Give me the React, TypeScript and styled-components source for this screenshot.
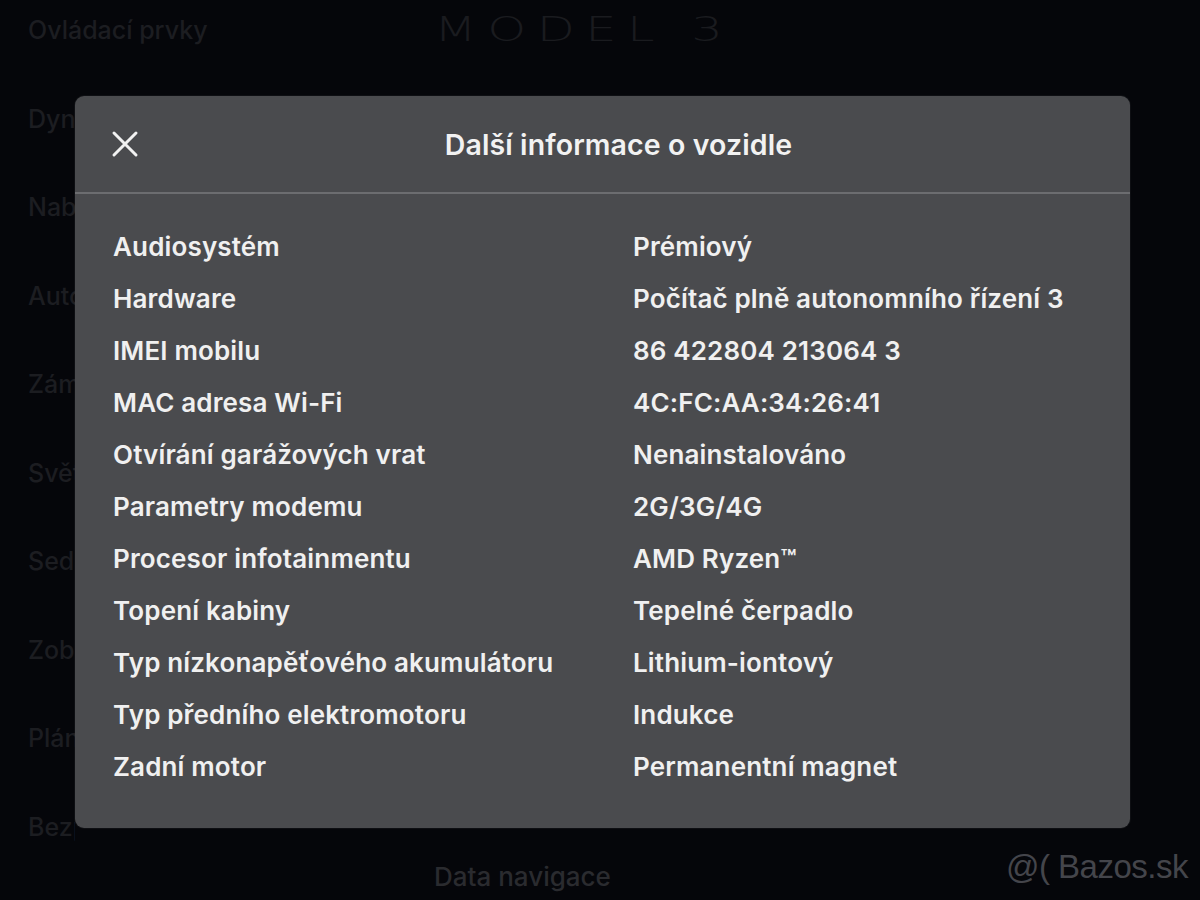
import React from "react";
import styled, { createGlobalStyle } from "styled-components";

const Global = createGlobalStyle`
  html, body { margin: 0; padding: 0; background: #05060a; }
  body { font-family: Inter, "Noto Sans", sans-serif; -webkit-font-smoothing: antialiased; }
`;

const Screen = styled.div`
  position: relative;
  width: 1200px;
  height: 900px;
  overflow: hidden;
  background: #05060a;
  display: grid;
  grid-template-columns: 400px 1fr;
`;

const Sidebar = styled.nav`
  display: flex;
  flex-direction: column;
  padding: 15px 0 0 28px;
`;

const SideItem = styled.div<{ $clipped?: boolean }>`
  height: 88.5px;
  font-size: 25px;
  font-weight: 500;
  color: #1c1d21;
  white-space: nowrap;
  overflow: hidden;
  max-width: ${(p) => (p.$clipped ? "47px" : "none")};
`;

const Main = styled.main`
  display: flex;
  flex-direction: column;
  align-items: flex-start;
  justify-content: space-between;
  padding: 10px 0 8px 34px;
`;

const ModelTitle = styled.div`
  font-family: "DejaVu Sans", sans-serif;
  font-weight: 200;
  font-size: 33px;
  letter-spacing: 7px;
  color: #1a1b1f;
  transform: scaleX(1.5);
  transform-origin: left center;
`;

const BottomLabel = styled.div`
  font-size: 26px;
  font-weight: 500;
  color: #2a2b2f;
`;

const Watermark = styled.div`
  position: absolute;
  right: 12px;
  bottom: 14px;
  font-family: "Liberation Sans", Arial, sans-serif;
  font-size: 33px;
  color: #44454b;
  letter-spacing: -0.5px;
`;

const Modal = styled.section`
  position: absolute;
  left: 75px;
  top: 96px;
  width: 1055px;
  height: 732px;
  background: #4a4b4e;
  border-radius: 9px;
  display: flex;
  flex-direction: column;
  box-shadow: 0 0 0 1px rgba(255,255,255,0.04);
`;

const ModalHeader = styled.header`
  position: relative;
  height: 96px;
  display: flex;
  align-items: center;
  justify-content: center;
  padding-left: 32px;
  border-bottom: 2px solid #6c6d70;
`;

const CloseButton = styled.button`
  position: absolute;
  left: 36px;
  top: 50%;
  transform: translateY(-50%);
  width: 28px;
  height: 28px;
  padding: 0;
  border: none;
  background: transparent;
  display: flex;
  align-items: center;
  justify-content: center;
`;

const Title = styled.h1`
  margin: 0;
  font-size: 28.5px;
  font-weight: 600;
  color: #f2f2f2;
  letter-spacing: 0.1px;
`;

const Table = styled.div`
  display: grid;
  grid-template-columns: 520px 1fr;
  grid-auto-rows: 52px;
  align-items: center;
  padding: 26px 38px 0 38px;
`;

const Cell = styled.div`
  font-size: 26px;
  font-weight: 600;
  color: #f0f0f0;
  white-space: nowrap;
  letter-spacing: 0.15px;
`;

const rows: [string, string][] = [
  ["Audiosystém", "Prémiový"],
  ["Hardware", "Počítač plně autonomního řízení 3"],
  ["IMEI mobilu", "86 422804 213064 3"],
  ["MAC adresa Wi-Fi", "4C:FC:AA:34:26:41"],
  ["Otvírání garážových vrat", "Nenainstalováno"],
  ["Parametry modemu", "2G/3G/4G"],
  ["Procesor infotainmentu", "AMD Ryzen™"],
  ["Topení kabiny", "Tepelné čerpadlo"],
  ["Typ nízkonapěťového akumulátoru", "Lithium-iontový"],
  ["Typ předního elektromotoru", "Indukce"],
  ["Zadní motor", "Permanentní magnet"],
];

const sideItems = [
  "Ovládací prvky",
  "Dynamika",
  "Nabíjení",
  "Autopilot",
  "Zámky",
  "Světla",
  "Sedačky",
  "Zobrazení",
  "Plánování",
  "Bezpečnost",
];

export default function App() {
  return (
    <>
      <Global />
      <Screen>
        <Sidebar>
          {sideItems.map((s, i) => (
            <SideItem key={s} $clipped={i > 0}>{s}</SideItem>
          ))}
        </Sidebar>
        <Main>
          <ModelTitle>MODEL 3</ModelTitle>
          <BottomLabel>Data navigace</BottomLabel>
        </Main>
        <Watermark>@( Bazos.sk</Watermark>
        <Modal>
          <ModalHeader>
            <CloseButton aria-label="Zavřít">
              <svg width="28" height="28" viewBox="0 0 28 28">
                <path d="M3 3 L25 25 M25 3 L3 25" stroke="#f2f2f2" strokeWidth="3" strokeLinecap="round" />
              </svg>
            </CloseButton>
            <Title>Další informace o vozidle</Title>
          </ModalHeader>
          <Table>
            {rows.map(([k, v]) => (
              <React.Fragment key={k}>
                <Cell>{k}</Cell>
                <Cell>{v}</Cell>
              </React.Fragment>
            ))}
          </Table>
        </Modal>
      </Screen>
    </>
  );
}
